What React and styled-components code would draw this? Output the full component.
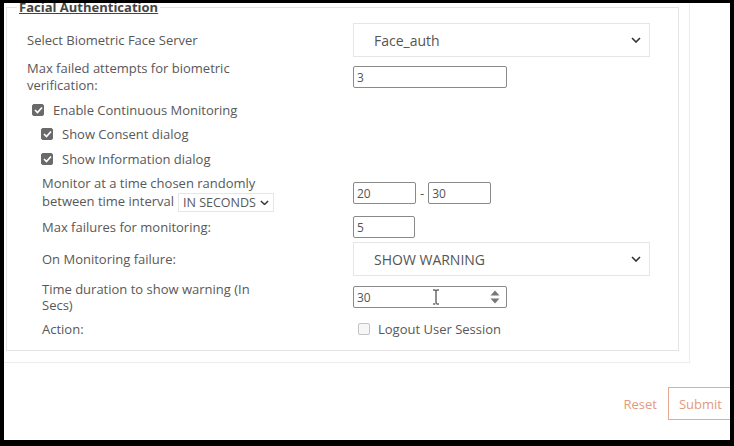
import React from "react";
import styled, { createGlobalStyle } from "styled-components";

const GlobalStyle = createGlobalStyle`
  html, body {
    margin: 0;
    padding: 0;
    background: #000;
  }
  body {
    font-family: "Open Sans", "Noto Sans", Arial, sans-serif;
  }
`;

const Frame = styled.div`
  width: 734px;
  height: 446px;
  box-sizing: border-box;
  padding: 3px 4px 6px 4px;
  background: #000;
`;

const Screen = styled.div`
  width: 100%;
  height: 100%;
  background: #fff;
  overflow: hidden;
  color: #585858;
`;

const Panel = styled.div`
  width: 686px;
  box-sizing: border-box;
  padding: 0 10px 11px 2px;
  border-right: 1px solid #ececec;
  border-bottom: 1px solid #ececec;
`;

const FieldSet = styled.fieldset`
  margin: -4px 0 0 0;
  padding: 8px 0 7px 20px;
  border: 1px solid #e4e4e4;
  min-width: 0;
`;

const Legend = styled.legend`
  padding: 0 2px;
  margin-left: -10px;
  font-size: 13px;
  line-height: 16px;
  font-weight: 700;
  color: #444;
  text-decoration: underline;
`;

const Row = styled.div`
  display: grid;
  grid-template-columns: 326px 1fr;
  align-items: center;
  height: ${p => p.h}px;
`;

const Label = styled.div`
  box-sizing: border-box;
  max-width: 255px;
  padding-left: ${p => (p.indent ? 15 : 0)}px;
  font-size: 13px;
  line-height: ${p => p.lh || 17}px;
`;

const Controls = styled.div`
  display: flex;
  align-items: center;
  gap: 4px;
  font-size: 13px;
`;

const SelectBox = styled.div`
  box-sizing: border-box;
  display: flex;
  align-items: center;
  justify-content: space-between;
  width: 297px;
  height: 34px;
  padding: 0 8px 0 20px;
  border: 1px solid #e6e6e6;
  background: #fff;
  font-size: 14px;
  color: #555;
`;

const InlineSelect = styled.span`
  box-sizing: border-box;
  display: inline-flex;
  align-items: center;
  gap: 4px;
  height: 19px;
  margin-left: 4px;
  padding: 0 4px;
  border: 1px solid #e6e6e6;
  vertical-align: middle;
  font-size: 12.5px;
  line-height: 17px;
`;

const TextInput = styled.div`
  position: relative;
  box-sizing: border-box;
  display: flex;
  align-items: center;
  width: ${p => p.w}px;
  height: 22px;
  padding: 0 3px;
  border: 1px solid #8a8a8a;
  border-radius: 2px;
  font-size: 12px;
  color: #555;
`;

const Dash = styled.span`
  color: #555;
`;

const Spinner = styled.svg`
  position: absolute;
  right: 6px;
  top: 3px;
`;

const Cursor = styled.svg`
  position: absolute;
  left: 78px;
  top: 2px;
`;

const CheckRow = styled.label`
  display: flex;
  align-items: center;
  gap: ${p => p.gap || 9}px;
  height: ${p => p.h}px;
  padding-left: ${p => p.indent}px;
  font-size: 13px;
`;

const Box = styled.span`
  box-sizing: border-box;
  display: inline-flex;
  align-items: center;
  justify-content: center;
  width: 12px;
  height: 12px;
  border-radius: 2px;
  background: ${p => (p.checked ? "#6a6a6a" : "#f6f6f6")};
  border: 1px solid ${p => (p.checked ? "#6a6a6a" : "#c4c4c4")};
`;

const Footer = styled.div`
  display: flex;
  justify-content: flex-end;
  align-items: center;
  gap: 11px;
  width: 729px;
  padding-top: 24px;
`;

const LinkButton = styled.button`
  border: none;
  background: none;
  padding: 0;
  font-family: inherit;
  font-size: 13px;
  color: #e39a7f;
`;

const OutlineButton = styled.button`
  height: 33px;
  padding: 0 10px;
  border: 1px solid #e8a891;
  background: #fff;
  font-family: inherit;
  font-size: 13px;
  color: #e39a7f;
`;

const Chevron = ({ size = 10 }) => (
  <svg width={size} height={size * 0.6} viewBox="0 0 10 6">
    <polyline points="1,1 5,5 9,1" fill="none" stroke="#333" strokeWidth="1.6" />
  </svg>
);

const Check = ({ checked }) => (
  <Box checked={checked}>
    {checked && (
      <svg width="9" height="8" viewBox="0 0 9 8">
        <polyline points="1,4 3.5,6.5 8,1.5" fill="none" stroke="#fff" strokeWidth="1.7" />
      </svg>
    )}
  </Box>
);

export default function App() {
  return (
    <Frame>
      <GlobalStyle />
      <Screen>
        <Panel>
          <FieldSet>
            <Legend>Facial Authentication</Legend>

            <Row h={33}>
              <Label>Select Biometric Face Server</Label>
              <SelectBox>
                Face_auth
                <Chevron />
              </SelectBox>
            </Row>

            <Row h={42}>
              <Label>Max failed attempts for biometric verification:</Label>
              <Controls>
                <TextInput w={154}>3</TextInput>
              </Controls>
            </Row>

            <CheckRow h={23} indent={5}>
              <Check checked />
              Enable Continuous Monitoring
            </CheckRow>
            <CheckRow h={25} indent={14}>
              <Check checked />
              Show Consent dialog
            </CheckRow>
            <CheckRow h={25} indent={14}>
              <Check checked />
              Show Information dialog
            </CheckRow>

            <Row h={44}>
              <Label indent lh={18}>
                Monitor at a time chosen randomly between time interval
                <InlineSelect>
                  IN SECONDS
                  <Chevron size={9} />
                </InlineSelect>
              </Label>
              <Controls>
                <TextInput w={63}>20</TextInput>
                <Dash>-</Dash>
                <TextInput w={63}>30</TextInput>
              </Controls>
            </Row>

            <Row h={24}>
              <Label indent>Max failures for monitoring:</Label>
              <Controls>
                <TextInput w={62}>5</TextInput>
              </Controls>
            </Row>

            <Row h={40}>
              <Label indent>On Monitoring failure:</Label>
              <SelectBox>
                SHOW WARNING
                <Chevron />
              </SelectBox>
            </Row>

            <Row h={36}>
              <Label indent lh={16}>Time duration to show warning (In Secs)</Label>
              <Controls>
                <TextInput w={154}>
                  30
                  <Cursor width="8" height="16" viewBox="0 0 8 16">
                    <path d="M1 1h2.2c.5 0 .8.4.8.8v12.4c0 .4.3.8.8.8H7M1 15h2.2M7 1H4.8c-.5 0-.8.4-.8.8" fill="none" stroke="#222" strokeWidth="1" />
                  </Cursor>
                  <Spinner width="10" height="14" viewBox="0 0 10 14">
                    <path d="M5 0.5 L9.5 5.5 H0.5 Z" fill="#777" />
                    <path d="M5 13.5 L9.5 8.5 H0.5 Z" fill="#777" />
                  </Spinner>
                </TextInput>
              </Controls>
            </Row>

            <Row h={28}>
              <Label indent>Action:</Label>
              <CheckRow h={28} indent={5} gap={8}>
                <Check />
                Logout User Session
              </CheckRow>
            </Row>
          </FieldSet>
        </Panel>

        <Footer>
          <LinkButton>Reset</LinkButton>
          <OutlineButton>Submit</OutlineButton>
        </Footer>
      </Screen>
    </Frame>
  );
}
